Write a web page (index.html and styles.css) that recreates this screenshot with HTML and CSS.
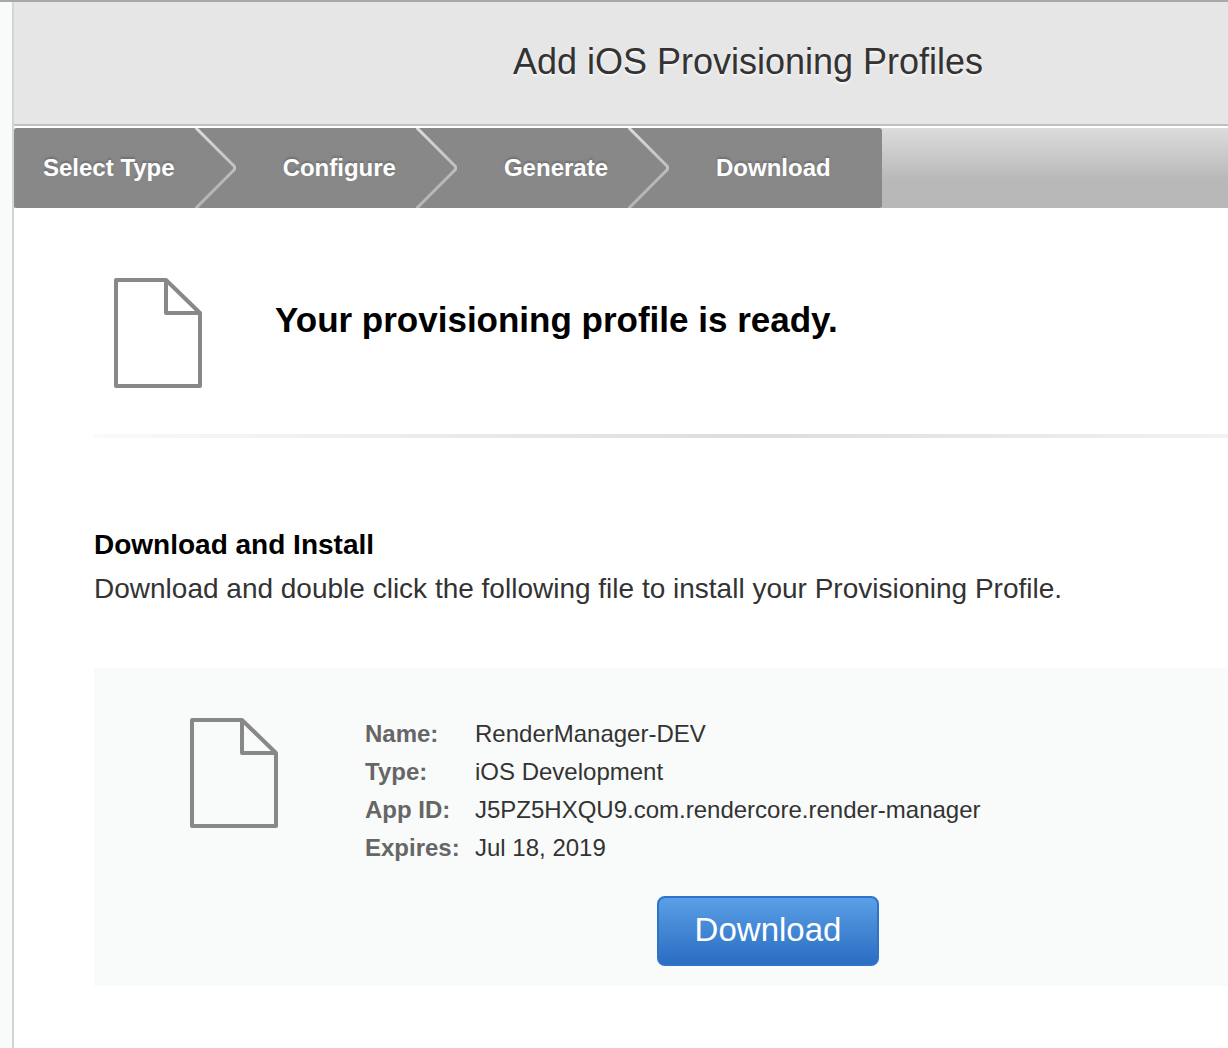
FILE: index.html
```html
<!DOCTYPE html>
<html lang="en">
<head>
<meta charset="utf-8">
<meta name="viewport" content="width=device-width, initial-scale=1">
<title>Add iOS Provisioning Profiles</title>
<link rel="stylesheet" href="styles.css">
</head>
<body>
<svg class="symbols" aria-hidden="true">
  <defs>
    <linearGradient id="edge" gradientUnits="userSpaceOnUse" x1="0" y1="0" x2="0" y2="80">
      <stop offset="0" stop-color="#dcdcdc"/>
      <stop offset="0.65" stop-color="#b8b8b8"/>
      <stop offset="1" stop-color="#b8b8b8"/>
    </linearGradient>
  </defs>
  <symbol id="chevron" viewBox="0 0 42 80">
    <path d="M-1 -2 L39.500 38.500 V41.500 L-1 82" fill="none" stroke="url(#edge)" stroke-width="3"/>
  </symbol>
  <symbol id="document" viewBox="0 0 88 110">
    <path d="M2 2 H52 L86 35 V108 H2 Z M52 2 V35 H86" fill="none" stroke="#888" stroke-width="4" stroke-linejoin="round"/>
  </symbol>
</svg>
<div class="page">
  <main class="panel">
    <header class="header">
      <h1 class="title">Add iOS Provisioning Profiles</h1>
    </header>
    <nav class="steps" aria-label="Progress">
      <ol class="step-list">
        <li class="step"><span class="step-name">Select Type</span><svg class="chevron" aria-hidden="true"><use href="#chevron"/></svg></li>
        <li class="step"><span class="step-name">Configure</span><svg class="chevron" aria-hidden="true"><use href="#chevron"/></svg></li>
        <li class="step"><span class="step-name">Generate</span><svg class="chevron" aria-hidden="true"><use href="#chevron"/></svg></li>
        <li class="step" aria-current="step"><span class="step-name">Download</span></li>
      </ol>
    </nav>
    <div class="content">
      <section class="ready">
        <svg class="document" aria-hidden="true"><use href="#document"/></svg>
        <h2 class="ready-title">Your provisioning profile is ready.</h2>
      </section>
      <section class="install">
        <h3 class="install-title">Download and Install</h3>
        <p class="install-text">Download and double click the following file to install your Provisioning Profile.</p>
        <div class="card">
          <div class="profile">
            <svg class="document" aria-hidden="true"><use href="#document"/></svg>
            <dl class="details">
              <dt>Name:</dt><dd>RenderManager-DEV</dd>
              <dt>Type:</dt><dd>iOS Development</dd>
              <dt>App ID:</dt><dd>J5PZ5HXQU9.com.rendercore.render-manager</dd>
              <dt>Expires:</dt><dd>Jul 18, 2019</dd>
            </dl>
          </div>
          <div class="actions">
            <button class="download" type="button">Download</button>
          </div>
        </div>
      </section>
    </div>
  </main>
</div>
</body>
</html>
```
FILE: styles.css
```css
* {
  box-sizing: border-box;
}

body {
  margin: 0;
  background: #fff;
  color: #333;
  font-family: "Liberation Sans", Arial, sans-serif;
}

h1, h2, h3, p, ol, dl, dd {
  margin: 0;
  padding: 0;
}

.symbols {
  position: absolute;
  width: 0;
  height: 0;
}

.page {
  min-height: 100vh;
  display: flex;
  padding-left: 12px;
  border-top: 2px solid #a8a8a8;
  background: #f9fbfa;
}

.panel {
  flex: 1;
  min-width: 0;
  border-left: 2px solid #d4d4d4;
  background: #fff;
}

.header {
  padding: 38px 0 40px 254px;
  border-bottom: 2px solid #c0c0c0;
  background: #e6e6e6;
  text-align: center;
}

.title {
  font-size: 36px;
  line-height: 44px;
  font-weight: 400;
  text-shadow: 0 2px 2px rgba(255, 255, 255, 0.7);
}

.steps {
  display: flex;
  margin-top: 2px;
  background: linear-gradient(#dcdcdc, #b8b8b8 65%, #b8b8b8);
}

.step-list {
  display: flex;
  padding: 0 51px 0 29px;
  border-radius: 3px;
  background: #888;
  list-style: none;
}

.step {
  display: flex;
  align-items: center;
  height: 80px;
}

.step-name {
  color: #fff;
  font-size: 24px;
  line-height: 28px;
  font-weight: 700;
  text-shadow: 0 -2px 2px #707070;
}

.chevron {
  width: 42px;
  height: 80px;
  margin: 0 46px 0 20px;
}

.content {
  padding: 70px 0 62px 80px;
}

.document {
  flex: none;
  width: 88px;
  height: 110px;
}

.ready {
  display: flex;
  gap: 73px;
  padding: 0 0 46px 20px;
}

.ready-title {
  padding-top: 20px;
  color: #000;
  font-size: 35px;
  line-height: 44px;
}

.install {
  padding-top: 90px;
  border-top: 4px solid;
  border-image: linear-gradient(90deg, #fafafa, #ddd 58%, #f2f2f2) 1;
}

.install-title {
  color: #000;
  font-size: 28px;
  line-height: 34px;
}

.install-text {
  padding-top: 9px;
  font-size: 28px;
  line-height: 36px;
}

.card {
  margin-top: 61px;
  padding: 50px 0 20px 96px;
  background: #f9fbfa;
}

.profile {
  display: flex;
  gap: 87px;
}

.details {
  display: grid;
  grid-template-columns: 110px auto;
  margin-top: -3px;
  font-size: 24px;
  line-height: 38px;
}

.details dt {
  color: #666;
  font-weight: 700;
}

.actions {
  display: flex;
  justify-content: center;
  padding: 29px 0 0 118px;
}

.download {
  padding: 11px 36px 13px;
  border: 2px solid #2d74c9;
  border-radius: 8px;
  background: linear-gradient(#5a9fe6, #2a6dc2);
  color: #fff;
  font: 33px/42px "Liberation Sans", Arial, sans-serif;
}
```
